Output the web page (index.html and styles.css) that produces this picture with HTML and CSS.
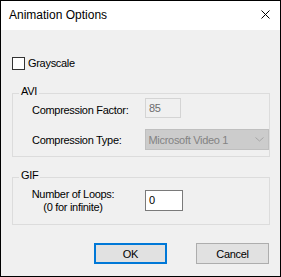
FILE: index.html
```html
<!DOCTYPE html>
<html>
	<head>
		<meta charset="UTF-8">
		<title>Animation Options</title>
		<link rel="stylesheet" href="styles.css">
	</head>
	<body>
		<div class="window">
			<div class="titlebar">
				<span class="title">Animation Options</span>
				<svg class="close" width="9" height="9" viewBox="0 0 9 9">
					<path d="M0.5 0.5 L8.5 8.5 M8.5 0.5 L0.5 8.5" stroke="#000" stroke-width="1" fill="none" />
				</svg>
			</div>

			<div class="client">
				<label class="check-row">
					<span class="checkbox"></span>
					<span>Grayscale</span>
				</label>

				<div class="group group-avi">
					<div class="group-title">AVI</div>
					<div class="row">
						<span class="label">Compression Factor:</span>
						<div class="textbox disabled">85</div>
					</div>
					<div class="row row-type">
						<span class="label label-type">Compression Type:</span>
						<div class="combo">
							<span>Microsoft Video 1</span>
							<svg width="9" height="5" viewBox="0 0 9 5">
								<path d="M0.5 0.5 L4.5 4 L8.5 0.5" stroke="#a6a6a6" fill="none" />
							</svg>
						</div>
					</div>
				</div>

				<div class="group group-gif">
					<div class="group-title">GIF</div>
					<div class="row row-loops">
						<span class="label label-loops">Number of Loops:<br>(0 for infinite)</span>
						<div class="textbox loops">0</div>
					</div>
				</div>

				<div class="buttons">
					<button class="btn btn-default">OK</button>
					<button class="btn">Cancel</button>
				</div>
			</div>
		</div>
	</body>
</html>
```

FILE: styles.css
```css
* {
	margin: 0;
	padding: 0;
	box-sizing: border-box;
}

body {
	background: #fff;
}

.window {
	width: 281px;
	height: 277px;
	border: 1px solid #000;
	background: #f0f0f0;
	font-family: "Liberation Sans", Arial, sans-serif;
	font-size: 11px;
	letter-spacing: -0.3px;
	color: #000;
}

/* title bar */
.titlebar {
	height: 29px;
	background: #fff;
	display: flex;
	justify-content: space-between;
	padding: 0 10px 0 8px;
}
.title {
	font-size: 12px;
	letter-spacing: 0;
	line-height: 29px;
}
.close {
	margin-top: 9px;
}

.client {
	padding: 27px 10px 0 11px;
}

/* checkbox */
.check-row {
	display: flex;
	align-items: center;
	height: 13px;
	line-height: 13px;
}
.checkbox {
	width: 13px;
	height: 13px;
	border: 1px solid #333;
	background: #fff;
	margin-right: 3px;
}

/* group boxes */
.group {
	border: 1px solid #dcdcdc;
	padding: 0 0 6px 19px;
}
.group-avi {
	margin-top: 23px;
}
.group-gif {
	margin-top: 20px;
	padding-bottom: 10px;
}
.group-title {
	width: fit-content;
	margin: -9px 0 0 -13px;
	padding: 0 2px;
	background: #f0f0f0;
	line-height: 13px;
}

.row {
	display: flex;
	align-items: flex-start;
}
.label {
	width: 113px;
	line-height: 13px;
	margin-top: 6px;
}
.row-type {
	margin-top: 11px;
}
.label-type {
	margin-top: 5px;
}

.textbox {
	width: 36px;
	height: 20px;
	border: 1px solid #7a7a7a;
	background: #fff;
	padding-left: 3px;
	line-height: 18px;
}
.textbox.disabled {
	border-color: #d4d4d4;
	background: #f0f0f0;
	color: #6d6d6d;
}

.combo {
	width: 125px;
	height: 21px;
	border: 1px solid #bfbfbf;
	background: #cccccc;
	color: #838383;
	display: flex;
	align-items: center;
	justify-content: space-between;
	padding: 0 4px 0 3px;
}

/* gif */
.row-loops {
	margin-top: 6px;
}
.label-loops {
	width: 90px;
	margin: 0 27px 0 -4px;
	text-align: center;
}
.textbox.loops {
	width: 38px;
	height: 21px;
	margin-top: 2px;
	line-height: 19px;
}

/* buttons */
.buttons {
	display: flex;
	justify-content: flex-end;
	gap: 29px;
	margin-top: 18px;
	padding-right: 1px;
}
.btn {
	width: 73px;
	height: 21px;
	border: 1px solid #adadad;
	background: #e1e1e1;
	font-family: "Liberation Sans", Arial, sans-serif;
	font-size: 11px;
	letter-spacing: -0.3px;
	color: #000;
}
.btn-default {
	border: 2px solid #0078d7;
}
```
